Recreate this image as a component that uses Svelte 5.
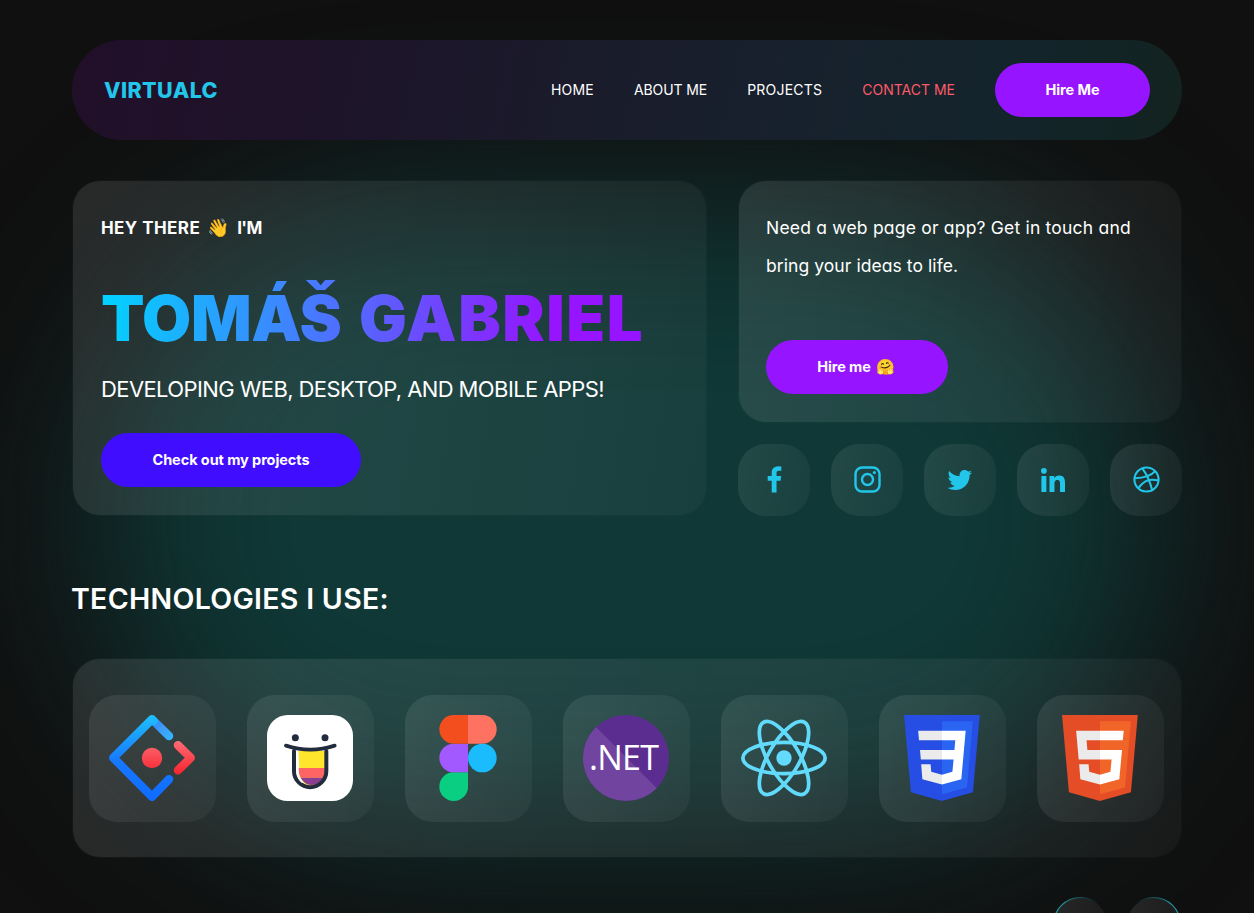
<script>
  const links = [
    { label: 'HOME', ls: 0.2 },
    { label: 'ABOUT ME', ls: -0.1 },
    { label: 'PROJECTS', ls: 0.22 },
    { label: 'CONTACT ME', ls: 0, accent: true },
  ];
  const socials = ['facebook', 'instagram', 'twitter', 'linkedin', 'dribbble'];
  const tools = ['ant', 'smile', 'figma', 'dotnet', 'react', 'css', 'html'];
</script>

<div class="page">
  <div class="glow"></div>
  <nav>
    <a class="logo" href="#top">VIRTUALC</a>
    <div class="links">
      {#each links as l}
        <a href="#top" class:accent={l.accent} style="letter-spacing: {l.ls}px">{l.label}</a>
      {/each}
    </div>
    <button class="pill violet nav-btn"><span>Hire Me</span></button>
  </nav>

  <section class="hero">
    <div class="card intro">
      <p class="hey"><span>HEY THERE</span><span class="emoji">👋</span><span class="im">I'M</span></p>
      <h1><span class="first">TOMÁŠ</span> <span class="last">GABRIEL</span></h1>
      <p class="sub">DEVELOPING WEB, DESKTOP, AND MOBILE APPS!</p>
      <button class="pill blue"><span>Check out my projects</span></button>
    </div>
    <div class="side">
      <div class="card contact">
        <p><span class="wide">Need a web page or app? Get in touch and</span><br />bring your ideas to life.</p>
        <button class="pill violet hire"><span>Hire me</span><span class="emoji small">🤗</span></button>
      </div>
      <div class="socials">
        {#each socials as s}
          <a class="social" href="#top" aria-label={s}>
            {#if s === 'facebook'}
              <svg width="35" height="35" viewBox="0 0 24 24"><path fill="currentColor" d="M13.397 20.997v-8.196h2.765l.411-3.209h-3.176V7.548c0-.926.258-1.56 1.587-1.56h1.684V3.127A22.336 22.336 0 0 0 14.201 3c-2.444 0-4.122 1.492-4.122 4.231v2.355H7.332v3.209h2.753v8.202h3.312z" /></svg>
            {:else if s === 'instagram'}
              <svg width="27" height="27" viewBox="0 0 27 27" fill="none" stroke="currentColor" stroke-width="2.4"><rect x="1.5" y="1.5" width="24" height="24" rx="6.6" /><circle cx="13.5" cy="13.5" r="5.500" /><circle cx="20.4" cy="6.6" r="1.6" fill="currentColor" stroke="none" /></svg>
            {:else if s === 'twitter'}
              <svg width="30" height="30" viewBox="0 0 24 24"><path fill="currentColor" d="M19.633 7.997c.013.175.013.349.013.523 0 5.325-4.053 11.461-11.46 11.461-2.282 0-4.402-.661-6.186-1.809.324.037.636.05.973.05a8.07 8.07 0 0 0 5.001-1.721 4.036 4.036 0 0 1-3.767-2.793c.249.037.499.062.761.062.361 0 .724-.05 1.061-.137a4.027 4.027 0 0 1-3.23-3.953v-.05c.537.299 1.16.486 1.82.511a4.022 4.022 0 0 1-1.796-3.354c0-.748.199-1.434.548-2.032a11.457 11.457 0 0 0 8.306 4.215c-.062-.3-.1-.611-.1-.923a4.026 4.026 0 0 1 4.028-4.028c1.16 0 2.207.486 2.943 1.272a7.957 7.957 0 0 0 2.556-.973 4.02 4.02 0 0 1-1.771 2.22 8.073 8.073 0 0 0 2.319-.624 8.645 8.645 0 0 1-2.019 2.083z" /></svg>
            {:else if s === 'linkedin'}
              <svg width="24" height="24" viewBox="0 0 448 448"><path fill="currentColor" d="M100.28 448H7.4V148.9h92.88zM53.79 108.1C24.09 108.1 0 83.5 0 53.8a53.79 53.79 0 0 1 107.58 0c0 29.7-24.1 54.3-53.79 54.3zM447.9 448h-92.68V302.4c0-34.7-.7-79.2-48.29-79.2-48.29 0-55.69 37.7-55.69 76.7V448h-92.78V148.9h89.08v40.8h1.3c12.4-23.5 42.69-48.3 87.88-48.3 94 0 111.28 61.9 111.28 142.3V448z" /></svg>
            {:else}
              <svg width="29" height="29" viewBox="0 0 24 24" fill="none" stroke="currentColor" stroke-width="1.7"><circle cx="12" cy="12" r="10" /><path d="M8.56 2.75c4.37 6.03 6.02 9.42 8.03 17.72m2.54-15.38c-3.72 4.35-8.94 5.66-16.88 5.85m19.5 1.9c-3.5-.93-6.63-.82-8.94 0-2.58.92-5.01 2.86-7.44 6.32" /></svg>
            {/if}
          </a>
        {/each}
      </div>
    </div>
  </section>

  <h2>TECHNOLOGIES I USE:</h2>

  <section class="card tech">
    {#each tools as t}
      <div class="tile">
        {#if t === 'ant'}
          <svg viewBox="0 0 258 258">
            <defs>
              <linearGradient id="ant-a" gradientUnits="userSpaceOnUse" x1="0" y1="0" x2="0" y2="258"><stop offset="0" stop-color="#1fc0fb" /><stop offset=".55" stop-color="#1677ff" /><stop offset="1" stop-color="#0f6bff" /></linearGradient>
              <linearGradient id="ant-b" gradientUnits="userSpaceOnUse" x1="129" y1="20" x2="185" y2="70"><stop offset="0" stop-color="#2f86f5" /><stop offset=".5" stop-color="#3f9cf7" /><stop offset="1" stop-color="#35b4ff" /></linearGradient>
              <linearGradient id="ant-c" gradientUnits="userSpaceOnUse" x1="0" y1="80" x2="0" y2="180"><stop offset="0" stop-color="#ff6b73" /><stop offset="1" stop-color="#f5222d" /></linearGradient>
            </defs>
            <g fill="none" stroke-width="25.500" stroke-linecap="round" stroke-linejoin="round">
              <path d="M138 21.500 180 63" stroke="url(#ant-b)" />
              <path d="M180 193 129 245 13 128.500 129 13 134 18" stroke="url(#ant-a)" />
              <path d="M207 91 245 128.500 207 166" stroke="url(#ant-c)" />
            </g>
            <circle cx="129" cy="129" r="30.500" fill="url(#ant-c)" />
          </svg>
        {:else if t === 'smile'}
          <svg viewBox="0 0 258 258">
            <rect width="258" height="258" rx="62" fill="#fff" />
            <path d="M94 108H174V168A38 40 0 0 1 98 180Z" fill="#ffe52b" />
            <path d="M95 159H174V188H101Q95 178 95 159Z" fill="#ff6464" />
            <path d="M101 188H168Q156 210 132 210 112 208 101 188Z" fill="#8a3d91" />
            <g fill="none" stroke="#232c3d" stroke-linecap="round">
              <path d="M81 108V168A48.500 48.500 0 0 0 178 168V108" stroke-width="12" />
              <path d="M57 92Q130 116 203 92" stroke-width="11.500" />
            </g>
            <path d="M91 113V168Q92 190 107 202" fill="none" stroke="#fff" stroke-width="6" />
            <circle cx="85" cy="68" r="10.500" fill="#232c3d" /><circle cx="174" cy="68" r="10.500" fill="#232c3d" />
          </svg>
        {:else if t === 'figma'}
          <svg viewBox="-50 0 300 300">
            <path d="M50 300a50 50 0 0 0 50-50v-50H50a50 50 0 0 0 0 100z" fill="#0acf83" />
            <path d="M0 150a50 50 0 0 1 50-50h50v100H50a50 50 0 0 1-50-50z" fill="#a259ff" />
            <path d="M0 50A50 50 0 0 1 50 0h50v100H50A50 50 0 0 1 0 50z" fill="#f24e1e" />
            <path d="M100 0h50a50 50 0 0 1 0 100h-50z" fill="#ff7262" />
            <circle cx="150" cy="150" r="50" fill="#1abcfe" />
          </svg>
        {:else if t === 'dotnet'}
          <svg viewBox="0 0 86 86">
            <defs><clipPath id="disc"><circle cx="43" cy="43" r="43" /></clipPath></defs>
            <circle cx="43" cy="43" r="43" fill="#5c2d91" />
            <path d="M0 -1 86 85.500 0 86Z" fill="#71459f" clip-path="url(#disc)" />
            <text x="6" y="54.700" textLength="70" class="net">.NET</text>
          </svg>
        {:else if t === 'react'}
          <svg viewBox="-11.5 -11.5 23 23">
            <circle r="2.050" fill="#61dafb" />
            <g fill="none" stroke="#61dafb"><ellipse rx="11" ry="4.200" /><ellipse rx="11" ry="4.200" transform="rotate(60)" /><ellipse rx="11" ry="4.200" transform="rotate(120)" /></g>
          </svg>
        {:else if t === 'css'}
          <svg viewBox="0 0 512 512">
            <path d="M71 460 30 0H481L440 460 255 512Z" fill="#264de4" />
            <path d="M256 472 405 431 440 37H256Z" fill="#2965f1" />
            <path d="M114 94H256V150H119ZM125 208H256V265H130ZM132 293H188L192 338 256 355V414L139 382Z" fill="#ebebeb" />
            <path d="M256 94H397L371 382 256 414V355L318 338 325 265H256V208H330L335 150H256Z" fill="#fff" />
          </svg>
        {:else}
          <svg viewBox="0 0 512 512">
            <path d="M71 460 30 0H481L440 460 255 512Z" fill="#e44d26" />
            <path d="M256 472 405 431 440 37H256Z" fill="#f16529" />
            <path d="M256 208H181L176 150H256V94H114L129 265H256ZM256 355 192 338 188 293H132L139 382 256 414Z" fill="#ebebeb" />
            <path d="M256 208V265H325L318 338 256 355V414L371 382 387 208ZM256 94V150H392L397 94Z" fill="#fff" />
          </svg>
        {/if}
      </div>
    {/each}
  </section>

  <div class="arrows">
    <div class="arrow"></div>
    <div class="arrow next"></div>
  </div>
</div>

<style>
  :global(body) { background: #101010; }
  .page {
    position: relative;
    box-sizing: border-box;
    width: 1254px;
    height: 913px;
    padding: 40px 72px 0;
    overflow: hidden;
    isolation: isolate;
    color: #fff;
    font-family: Inter, "Liberation Sans", sans-serif;
    font-feature-settings: "cv11";
    white-space: nowrap;
  }
  .glow {
    position: absolute;
    z-index: -1;
    left: 95px;
    top: 205px;
    width: 1065px;
    height: 630px;
    border-radius: 320px;
    background: #0f3836;
    filter: blur(88px);
  }
  p, h1, h2 { margin: 0; }
  a { color: inherit; text-decoration: none; }
  nav {
    box-sizing: border-box;
    display: flex;
    align-items: center;
    height: 100px;
    padding: 0 32px;
    border-radius: 50px;
    background: linear-gradient(102deg, #220f29 0%, #1d1429 25%, #1a1b2b 45%, #17212d 65%, #13242b 85%, #12231f 100%);
  }
  .logo { color: #22c6ea; font-size: 21.500px; font-weight: 800; letter-spacing: .4px; }
  .links { display: flex; gap: 40px; margin-left: auto; padding-bottom: 2px; font-size: 14px; }
  .accent { color: #ff5a67; }
  .pill {
    display: flex;
    align-items: center;
    justify-content: center;
    height: 54px;
    padding: 0 0 2px;
    border: 0;
    border-radius: 27px;
    color: #fff;
    font: 700 14.500px Inter, sans-serif;
    font-feature-settings: "cv11";
    letter-spacing: -.08px;
  }
  .violet { background: #9614ff; }
  .blue { width: 260px; margin-top: 30px; background: #400dff; }
  .nav-btn { width: 155px; margin-left: 40px; }
  .hero { display: flex; gap: 31px; margin-top: 40px; }
  .card {
    box-sizing: border-box;
    border: 1px solid rgba(255, 255, 255, .02);
    border-radius: 28px;
    background: linear-gradient(100deg, rgba(255, 255, 255, .105), rgba(255, 255, 255, .04)) padding-box;
  }
  .intro { width: 635px; height: 336px; padding: 33px 28px 0; }
  .hey { display: flex; font-size: 17px; font-weight: 700; line-height: 28px; letter-spacing: .42px; }
  .im { letter-spacing: -.6px; }
  .emoji { width: 22px; margin: 0 8px 0 7px; font-size: 18px; letter-spacing: 0; }
  .small { width: 19px; margin: 0 0 0 5px; font-size: 15px; }
  h1 {
    width: 578px;
    margin-top: 34px;
    background: linear-gradient(95deg, #00d4ff 0%, #9614ff 78%);
    background-clip: text;
    -webkit-background-clip: text;
    color: transparent;
    font-size: 63.500px;
    font-weight: 900;
    line-height: 84px;
    word-spacing: 5px;
  }
  .first { letter-spacing: -.4px; }
  .last { letter-spacing: 1.6px; }
  .sub { margin-top: 15px; font-size: 22px; line-height: 28px; letter-spacing: -.6px; }
  .side { width: 444px; }
  .contact { height: 243px; padding: 28px 27px; }
  .contact p { font-size: 17.500px; line-height: 38px; letter-spacing: .07px; }
  .contact .wide { letter-spacing: .2px; }
  .hire { width: 182px; margin-top: 55px; padding-right: 2px; }
  .socials { display: flex; justify-content: space-between; margin-top: 21px; }
  .social, .tile {
    box-sizing: border-box;
    display: flex;
    align-items: center;
    justify-content: center;
    background: linear-gradient(100deg, rgba(255, 255, 255, .085), rgba(255, 255, 255, .04));
  }
  .social { width: 72px; height: 72px; padding-bottom: 1px; border-radius: 28px; color: #22c6ea; }
  h2 { margin-top: 65px; font-size: 28.500px; font-weight: 600; line-height: 36px; letter-spacing: .3px; text-indent: -1px; }
  .tech { display: flex; gap: 31px; height: 200px; margin-top: 41px; padding: 36px 16px 0; }
  .tile { width: 127px; height: 127px; padding: 0 1px 1px 0; border-radius: 28px; flex: none; }
  .tile svg { width: 86px; height: 86px; }
  .net { fill: #fff; font: 34px "Open Sans", sans-serif; }
  .arrows { display: flex; gap: 18px; justify-content: flex-end; margin-top: 39px; padding-right: 1px; }
  .arrow {
    box-sizing: border-box;
    width: 55px;
    height: 55px;
    border: 1px solid transparent;
    border-radius: 50%;
    background: linear-gradient(100deg, #272727, #1b1b1b) padding-box, linear-gradient(90deg, #22b5c4, #101010 85%) border-box;
  }
  .next { background: linear-gradient(100deg, #272727, #1b1b1b) padding-box, linear-gradient(270deg, #22b5c4, #101010 85%) border-box; }
</style>
